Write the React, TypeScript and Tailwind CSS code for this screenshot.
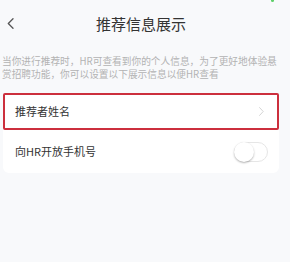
import React, { useState } from 'react';

const RecommendInfo: React.FC = () => {
  const [showPhone, setShowPhone] = useState(false);

  return (
    <div
      className="relative w-[290px] h-[262px] bg-[#f8f9fb] overflow-hidden"
      style={{ fontFamily: '"Noto Sans CJK SC", "Noto Sans", sans-serif' }}
    >
      {/* status bar leftover */}
      <span className="absolute top-0 left-[271px] w-[3px] h-[2px] rounded-b-sm bg-[#5fcf6a]" />

      <div className="w-[282px]">
        {/* Header */}
        <div className="relative h-[46px] flex items-center justify-center">
          <button className="absolute left-[5px] top-[15px] w-[10px] h-[16px] flex items-center justify-center">
            <svg width="7" height="11" viewBox="0 0 7 11" fill="none">
              <path d="M6 0.8L1.3 5.5L6 10.2" stroke="#555" strokeWidth="1.3" strokeLinecap="round" strokeLinejoin="round" />
            </svg>
          </button>
          <h1 className="text-[15px] leading-none text-[#333] pt-[1px]">推荐信息展示</h1>
        </div>

        {/* Description */}
        <p className="mt-[9px] pl-[2px] pr-[4px] text-[9.7px] leading-[13px] text-[#b3b3b3]">
          当你进行推荐时，HR可查看到你的个人信息，为了更好地体验悬赏招聘功能，你可以设置以下展示信息以便HR查看
        </p>

        {/* Card */}
        <div className="mt-[12px] ml-[3px] w-[276px] bg-white rounded-md">
          <div className="h-[37px] flex items-center justify-between pl-[10px] pr-[13px] border-2 border-[#cc2f3d] rounded-[2px]">
            <span className="text-[11px] text-[#333]">推荐者姓名</span>
            <svg width="5" height="9" viewBox="0 0 5 9" fill="none">
              <path d="M0.6 0.6L4.2 4.5L0.6 8.4" stroke="#cfcfcf" strokeWidth="0.9" strokeLinecap="round" strokeLinejoin="round" />
            </svg>
          </div>
          <div className="h-[43px] flex items-center justify-between pl-[12px] pr-[11px]">
            <span className="text-[11px] text-[#333]">向HR开放手机号</span>
            <button
              onClick={() => setShowPhone(!showPhone)}
              className={`relative w-[34px] h-[20px] rounded-full border ${showPhone ? 'bg-[#4cd964] border-[#4cd964]' : 'bg-white border-[#e6e6e6]'}`}
            >
              <span
                className="absolute top-[-1px] w-[20px] h-[20px] rounded-full bg-white shadow-[0_1px_2px_rgba(0,0,0,0.3)]"
                style={{ left: showPhone ? 13 : -1 }}
              />
            </button>
          </div>
        </div>
      </div>
    </div>
  );
};

export default function App() {
  return <RecommendInfo />;
}
